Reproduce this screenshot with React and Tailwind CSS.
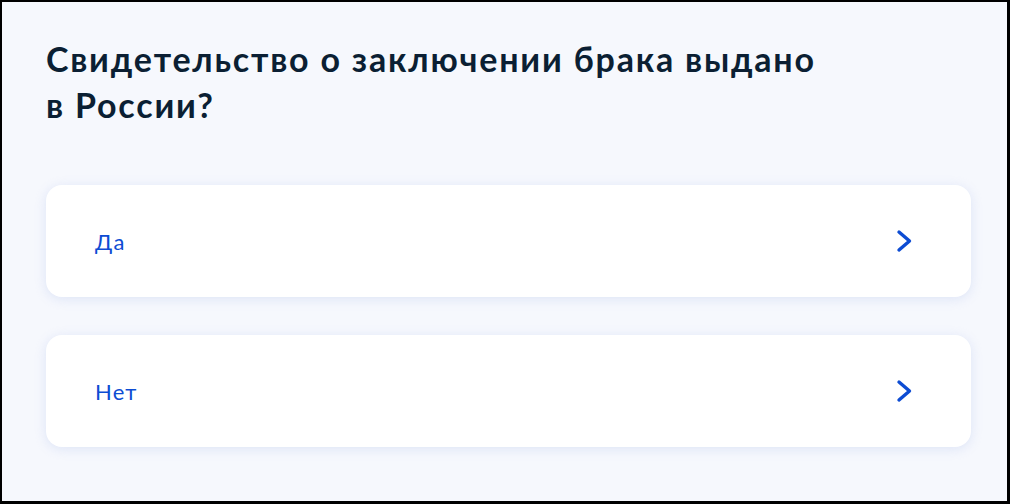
import React from 'react';

const options = [
  { id: 'yes', label: 'Да' },
  { id: 'no', label: 'Нет' },
];

const Chevron = () => (
  <svg width="16" height="24" viewBox="0 0 16 24" fill="none" className="shrink-0">
    <path d="M3 3l10.5 9L3 21" stroke="#0d4cd3" strokeWidth="3.4" strokeLinecap="round" strokeLinejoin="round" />
  </svg>
);

const App = () => {
  return (
    <div className="h-[504px] w-[1010px] border-l-2 border-t-2 border-r-[3px] border-b-[3px] border-black bg-[#f6f8fd] font-['Lato',sans-serif]">
      <div className="pl-[44px] pr-[36px] pt-[34px]">
        <h1 className="max-w-[785px] text-[34px] leading-[46px] font-bold tracking-[1.8px] text-[#0b1f33]">
          Свидетельство о заключении брака выдано в России?
        </h1>

        <div className="mt-[57px] flex flex-col gap-[38px]">
          {options.map(option => (
            <button
              key={option.id}
              className="flex h-[112px] w-full items-center justify-between rounded-2xl bg-white pl-[49px] pr-[59px] text-left shadow-[0_2px_12px_rgba(190,205,240,0.45)]"
            >
              <span className="text-[22px] tracking-[1.2px] text-[#0d4cd3]">{option.label}</span>
              <Chevron />
            </button>
          ))}
        </div>
      </div>
    </div>
  );
};

export default App;
